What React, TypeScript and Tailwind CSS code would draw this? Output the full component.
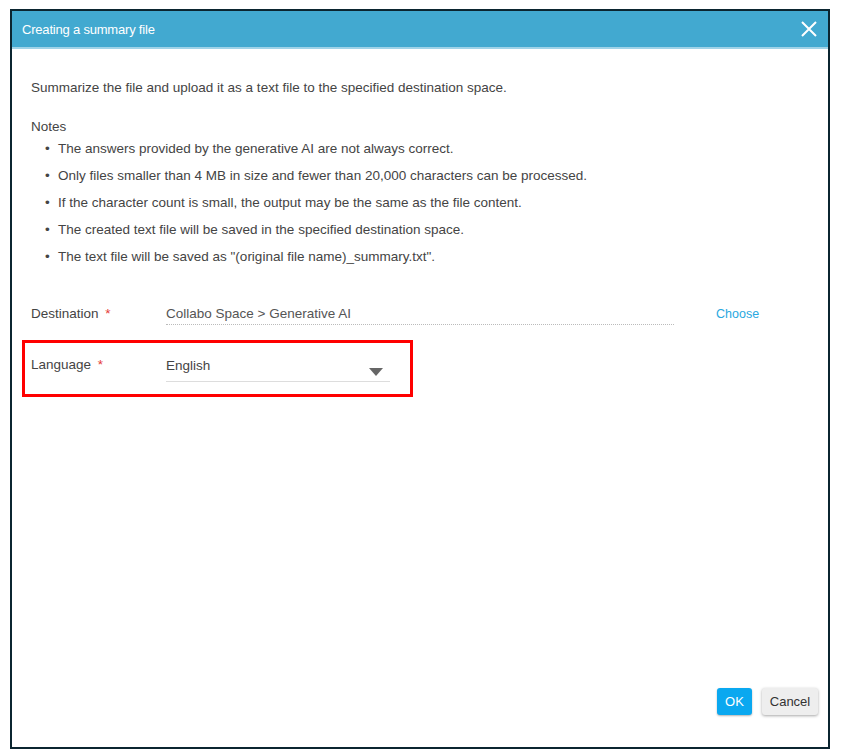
import React from "react";

export default function App() {
  const notes = [
    "The answers provided by the generative AI are not always correct.",
    "Only files smaller than 4 MB in size and fewer than 20,000 characters can be processed.",
    "If the character count is small, the output may be the same as the file content.",
    "The created text file will be saved in the specified destination space.",
    'The text file will be saved as "(original file name)_summary.txt".',
  ];
  return (
    <div className="w-[842px] h-[755px] bg-white pt-[9px] pl-[10px]" style={{ fontFamily: '"Liberation Sans", Arial, sans-serif' }}>
      <div className="w-[820px] h-[740px] border-2 border-[#0b2530] flex flex-col bg-white">
        <div className="h-[38px] bg-[#42a9d0] border-b-2 border-[#9fd3e8] flex items-center justify-between pl-[10px] pr-[10px]">
          <span className="text-white text-[13px] tracking-[-0.2px] mt-[1px]">Creating a summary file</span>
          <svg width="18" height="18" viewBox="0 0 18 18">
            <path d="M2 2 L16 16 M16 2 L2 16" stroke="white" strokeWidth="2" />
          </svg>
        </div>
        <div className="flex-1 flex flex-col pl-[19px] pr-[10px] text-[#444] text-[13.5px]">
          <p className="mt-[31px] leading-[16px]">Summarize the file and upload it as a text file to the specified destination space.</p>
          <p className="mt-[23px] leading-[16px]">Notes</p>
          <ul className="mt-[6px] flex flex-col gap-[11px]">
            {notes.map((n) => (
              <li key={n} className="flex items-start leading-[16px]">
                <span className="w-[27px] pl-[14px] text-[#444]">•</span>
                <span>{n}</span>
              </li>
            ))}
          </ul>
          <div className="mt-[41px] flex items-start">
            <div className="w-[135px] leading-[16px]">
              Destination <span className="text-[#e53935] ml-[3px]">*</span>
            </div>
            <div className="w-[508px] border-b border-dotted border-[#bbb] pb-[2px] leading-[16px] text-[#555]">
              Collabo Space &gt; Generative AI
            </div>
            <div className="ml-[42px] text-[#29a8e0] text-[12.5px] leading-[16px]">Choose</div>
          </div>
          <div className="mt-[15px] -ml-[9px] w-[391px] h-[57px] border-[3px] border-[#ff0000] flex items-start pt-[14px] pl-[6px]">
            <div className="w-[135px] leading-[16px]">
              Language <span className="text-[#e53935] ml-[3px]">*</span>
            </div>
            <div className="w-[224px] h-[25px] border-b border-[#ddd] flex justify-between leading-[16px] pt-[1px] text-[#444]">
              <span>English</span>
              <svg width="14" height="8" viewBox="0 0 14 8" className="mt-[10px] mr-[7px]">
                <path d="M0 0 L14 0 L7 8 Z" fill="#666" />
              </svg>
            </div>
          </div>
          <div className="flex-1" />
          <div className="flex justify-end gap-[10px] mb-[32px]">
            <button className="h-[27px] w-[35px] bg-[#0aa8f0] text-white text-[13px] rounded-[3px] shadow-[0_1px_2px_rgba(0,0,0,0.3)]">OK</button>
            <button className="h-[27px] w-[56px] bg-[#eeeeee] text-[#333] text-[13px] rounded-[3px] shadow-[0_1px_3px_rgba(0,0,0,0.35)]">Cancel</button>
          </div>
        </div>
      </div>
    </div>
  );
}
